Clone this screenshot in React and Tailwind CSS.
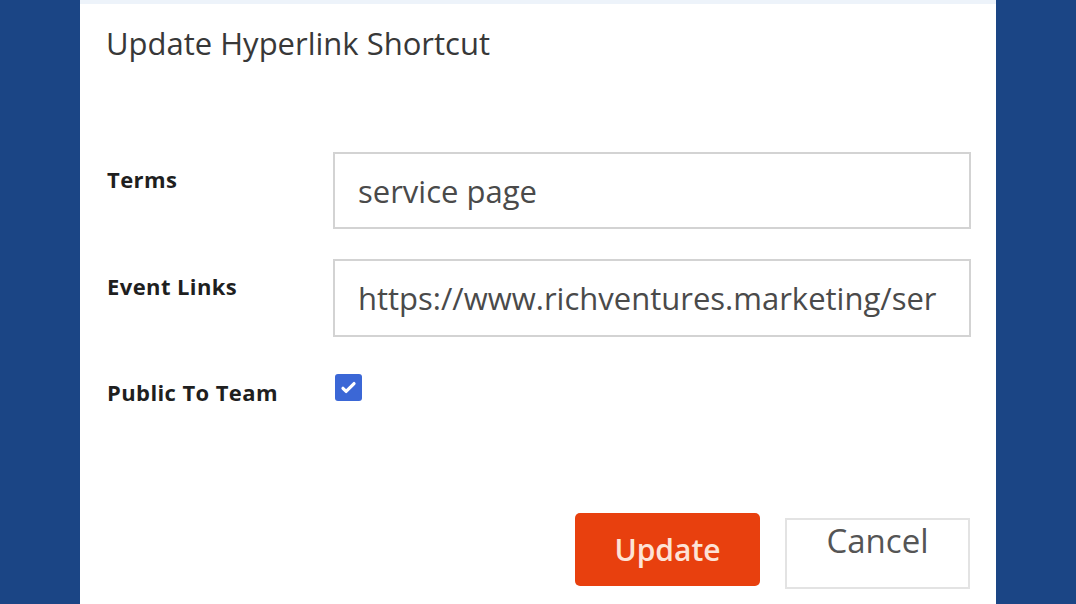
const font = { fontFamily: '"Open Sans", "Liberation Sans", sans-serif' };

const FieldRow = ({ label, children, className = '' }) => (
  <div className={`flex items-start ${className}`}>
    <div className="w-[226px] shrink-0 pt-[13px] text-[22px] leading-[28px] tracking-[0.4px] font-bold text-[#1f1f1f]">
      {label}
    </div>
    {children}
  </div>
);

export default function App() {
  return (
    <div className="w-[1076px] h-[604px] bg-[#1b4585] overflow-hidden" style={font}>
      <div className="ml-[80px] w-[916px] h-[604px] bg-white flex flex-col">
        <div className="h-[4px] bg-[#edf3fa]" />

        {/* header */}
        <div className="pl-[26px] pt-[19px] text-[31px] leading-[40px] text-[#383838]">
          Update Hyperlink Shortcut
        </div>

        {/* form */}
        <div className="pl-[27px] pr-[25px] mt-[89px] flex flex-col">
          <FieldRow label="Terms">
            <input
              readOnly
              value="service page"
              className="w-[638px] h-[77px] border-2 border-[#d3d3d3] pl-[23px] pr-[16px] text-[31px] text-[#4a4a4a] outline-none"
            />
          </FieldRow>
          <FieldRow label="Event Links" className="mt-[30px]">
            <input
              readOnly
              value="https://www.richventures.marketing/ser"
              className="w-[638px] h-[78px] border-2 border-[#d3d3d3] pl-[23px] pr-[16px] text-[31px] text-[#4a4a4a] outline-none"
            />
          </FieldRow>
          <div className="flex items-start mt-[37px]">
            <div className="w-[226px] shrink-0 pt-[4px] text-[22px] leading-[28px] tracking-[0.4px] font-bold text-[#1f1f1f]">
              Public To Team
            </div>
            <div className="ml-[2px] w-[27px] h-[27px] rounded-[3px] bg-[#3b67d6] flex items-center justify-center">
              <svg viewBox="0 0 24 24" className="w-[19px] h-[19px]" fill="none" stroke="white" strokeWidth="4" strokeLinecap="round" strokeLinejoin="round">
                <path d="M5 13l4 4L19 7" />
              </svg>
            </div>
          </div>
        </div>

        {/* footer */}
        <div className="mt-[107px] pr-[26px] flex justify-end items-start gap-[25px]">
          <button className="w-[185px] h-[73px] rounded-[5px] bg-[#e8400e] text-[30px] text-[#fde3d6] font-semibold">
            Update
          </button>
          <button className="mt-[5px] w-[185px] h-[71px] border-2 border-[#e3e3e3] bg-white flex justify-center items-start">
            <span className="mt-[3px] text-[33px] leading-[36px] text-[#555]">Cancel</span>
          </button>
        </div>
      </div>
    </div>
  );
}
